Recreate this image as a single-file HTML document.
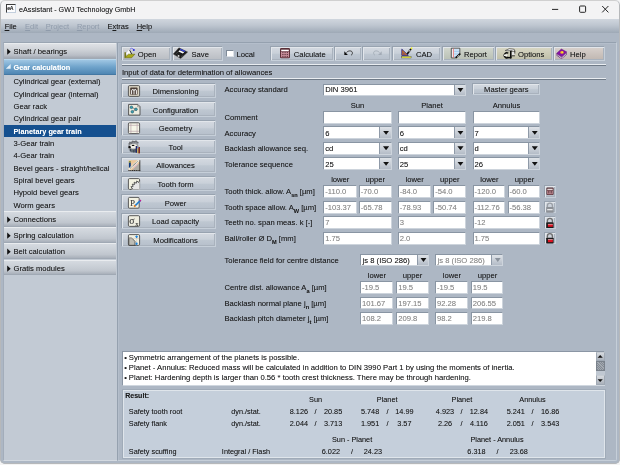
<!DOCTYPE html>
<html lang="en"><head><meta charset="utf-8"><title>eAssistant - GWJ Technology GmbH</title>
<style>
*{box-sizing:border-box;margin:0;padding:0}
html,body{width:620px;height:465px;overflow:hidden;background:#f4f4f4}
body{font-family:"Liberation Sans",Arial,sans-serif;font-size:7.65px;color:#1c1c1c;position:relative;text-shadow:0 0 0.45px rgba(20,24,30,.38)}
.a{position:absolute;white-space:nowrap}
.t{position:absolute;white-space:nowrap;height:9px;line-height:9px}
.c{text-align:center}.r{text-align:right}
.b{font-weight:bold;font-size:7.3px}
.s{font-size:7.3px}
#win{opacity:.999;position:absolute;left:0;top:0;width:620px;height:464.2px;background:#adb7c4;border-radius:5px;overflow:hidden}
#win:after{content:'';position:absolute;left:0;top:0;right:0;bottom:0;border:1px solid #b6b8ba;border-top-color:#d0d0d0;border-radius:5px;pointer-events:none}
#title{position:absolute;left:0;top:0;width:620px;height:19.4px;background:#f3f3f4}
#menu{position:absolute;left:0;top:19.4px;width:620px;height:13.4px;background:linear-gradient(#d0d6de,#bec6d0 45%,#9ea9b6)}
.mi.d{color:#8f9bab;text-shadow:none}
.mi u{text-decoration-thickness:0.7px;text-underline-offset:0.6px}
.hd{position:absolute;left:4px;width:112px;height:15.6px;background:linear-gradient(#d5dae0,#c9cfd6 45%,#c0c6ce 75%,#a9b0ba);border-top:1px solid #e9ecef;border-bottom:1px solid #a0a9b4}
.hd.sel{background:linear-gradient(#9fc6e3,#6fa3cb 50%,#4f86b3);border-top-color:#b7d6ec;border-bottom-color:#4478a3}
.btn{position:absolute;height:14.9px;background:linear-gradient(#d5dae1 0%,#c9d0d9 48%,#bec7d1 56%,#b6bfcb 100%);border:1px solid;border-color:#98a3b0 #c6cfd9 #c6cfd9 #98a3b0;box-shadow:inset 1px 1px 0 #e2e6eb,inset -1px -1px 0 #a9b2bd}
.inp{position:absolute;height:12.8px;background:#fff;border:1px solid #8995a3;border-bottom-color:#cdd4dc;border-right-color:#cdd4dc;overflow:hidden}
.ro{color:#8c8c8c;text-shadow:0 0 .5px rgba(140,140,140,.5)}
.w{color:#fff;text-shadow:0 0 .5px rgba(255,255,255,.5)}
.arr{position:absolute;right:0;top:0;bottom:0;width:11.3px;background:linear-gradient(#dfe3e8,#b4bcc7);border-left:1px solid #8f9aa8}
.arr:after{content:"";position:absolute;left:2.6px;top:3.3px;width:6.2px;height:4.1px;background:#111;clip-path:polygon(0 0,100% 0,50% 100%)}
.arr.dis:after{background:#8a929c}
sub{font-size:5.6px;vertical-align:baseline;position:relative;top:2.8px;font-weight:bold;line-height:0}
.sepd{position:absolute;height:1px;background:#6f7a87}
.sepl{position:absolute;height:1px;background:#e9edf1}
</style></head>
<body>
<div id="win">
<div id="title"></div>
<div class="a" style="left:5.6px;top:3.8px;width:10px;height:9.6px;border:1px solid #c3cfdd;border-top:1.5px solid #3a3a3a;border-left:1.5px solid #3a3a3a;background:#fcfcfd"></div>
<div class="t" style="left:7.3px;top:4px;font-size:5.2px;font-weight:bold;letter-spacing:-0.35px;color:#333">eA</div>
<div class="t" style="left:19.3px;top:5px;font-size:7.9px;color:#1e1e1e;transform-origin:0 0;transform:scaleX(0.911)">eAssistant - GWJ Technology GmbH</div>
<svg class="a" style="left:480px;top:0" width="140" height="19" viewBox="0 0 140 19"><g stroke="#1a1a1a" stroke-width="0.95" fill="none"><path d="M72 9.4h6.2"/><rect x="99.6" y="6" width="6" height="6.3" rx="0.9"/><path d="M122.2 6l6.2 6.4M128.400 6l-6.200 6.400"/></g></svg>
<div id="menu"></div>
<div class="t mi" style="left:4.7px;top:22px;font-size:7.5px;"><u>F</u>ile</div>
<div class="t mi d" style="left:25.1px;top:22px;font-size:7.5px;"><u>E</u>dit</div>
<div class="t mi d" style="left:45.7px;top:22px;font-size:7.5px;"><u>P</u>roject</div>
<div class="t mi d" style="left:76.9px;top:22px;font-size:7.5px;"><u>R</u>eport</div>
<div class="t mi" style="left:107.5px;top:22px;font-size:7.5px;">E<u>x</u>tras</div>
<div class="t mi" style="left:136.7px;top:22px;font-size:7.5px;"><u>H</u>elp</div>
<div class="a" style="left:3px;top:42px;width:114.4px;height:418.8px;background:#c2cad4;border-left:1px solid #a3adba;border-top:1px solid #9aa5b2;border-bottom:1px solid #d3d9e0"></div>
<div class="hd" style="top:43px;background:linear-gradient(#dee1e5,#cfd3d8 40%,#b9bec6 80%,#a2a8b1)"></div>
<svg class="a" style="left:0;top:43px" width="16" height="16"><polygon points="7.200,5.600 10.700,8.700 7.200,11.800" fill="#111"/></svg>
<div class="t" style="left:13.5px;top:47px;">Shaft / bearings</div>
<div class="hd sel" style="top:59.4px"></div>
<svg class="a" style="left:0;top:59.4px" width="16" height="16"><polygon points="10.700,5.100 10.700,9.700 5.800,9.700" fill="#e4eff8"/></svg>
<div class="t b w" style="left:13.5px;top:63px;">Gear calculation</div>
<div class="t" style="left:13.5px;top:77px;">Cylindrical gear (external)</div>
<div class="t" style="left:13.5px;top:90px;">Cylindrical gear (internal)</div>
<div class="t" style="left:13.5px;top:102px;">Gear rack</div>
<div class="t" style="left:13.5px;top:114px;">Cylindrical gear pair</div>
<div class="a" style="left:4px;top:125px;width:112px;height:12px;background:#15508f"></div>
<div class="t b w" style="left:13.5px;top:127px;">Planetary gear train</div>
<div class="t" style="left:13.5px;top:139px;">3-Gear train</div>
<div class="t" style="left:13.5px;top:151px;">4-Gear train</div>
<div class="t" style="left:13.5px;top:164px;">Bevel gears - straight/helical</div>
<div class="t" style="left:13.5px;top:176px;">Spiral bevel gears</div>
<div class="t" style="left:13.5px;top:188px;">Hypoid bevel gears</div>
<div class="t" style="left:13.5px;top:201px;">Worm gears</div>
<div class="hd" style="top:211px"></div>
<svg class="a" style="left:0;top:211px" width="16" height="16"><polygon points="7.200,5.600 10.700,8.700 7.200,11.800" fill="#111"/></svg>
<div class="t" style="left:13.5px;top:215px;">Connections</div>
<div class="hd" style="top:227.2px"></div>
<svg class="a" style="left:0;top:227.2px" width="16" height="16"><polygon points="7.200,5.600 10.700,8.700 7.200,11.800" fill="#111"/></svg>
<div class="t" style="left:13.5px;top:231px;">Spring calculation</div>
<div class="hd" style="top:243.4px"></div>
<svg class="a" style="left:0;top:243.4px" width="16" height="16"><polygon points="7.200,5.600 10.700,8.700 7.200,11.800" fill="#111"/></svg>
<div class="t" style="left:13.5px;top:247px;">Belt calculation</div>
<div class="hd" style="top:259.6px"></div>
<svg class="a" style="left:0;top:259.6px" width="16" height="16"><polygon points="7.200,5.600 10.700,8.700 7.200,11.800" fill="#111"/></svg>
<div class="t" style="left:13.5px;top:264px;">Gratis modules</div>
<div class="a" style="left:117.4px;top:42.2px;width:499.4px;height:419.3px;border:1px solid #95a1af;border-right-color:#c5ced8;border-bottom-color:#c5ced8;border-radius:0 0 2px 0;box-shadow:inset 1px 1px 0 #b4becb"></div>
<div class="btn" style="left:121px;top:45.6px;width:50.1px;height:15.6px;background:linear-gradient(#d3d6da,#c6c9ce 50%,#b9bdc3);"></div>
<div class="t" style="left:137.7px;top:50px;">Open</div>
<div class="btn" style="left:172px;top:45.6px;width:51px;height:15.6px;background:linear-gradient(#d3d6da,#c6c9ce 50%,#b9bdc3);"></div>
<div class="t" style="left:191.5px;top:50px;">Save</div>
<div class="a" style="left:226.3px;top:49.5px;width:7.6px;height:7.6px;background:#fff;border:1px solid #7f8b99;border-right-color:#dde2e8;border-bottom-color:#dde2e8"></div>
<div class="t" style="left:236.5px;top:50px;">Local</div>
<div class="btn" style="left:270px;top:45.6px;width:63.8px;height:15.6px;"></div>
<div class="t" style="left:293.8px;top:50px;">Calculate</div>
<div class="btn" style="left:334px;top:45.6px;width:28.1px;height:15.6px;"></div>
<div class="btn" style="left:362px;top:45.6px;width:29.4px;height:15.6px;"></div>
<div class="btn" style="left:392px;top:45.6px;width:49.3px;height:15.6px;"></div>
<div class="t" style="left:416px;top:50px;">CAD</div>
<div class="btn" style="left:442px;top:45.6px;width:52.8px;height:15.6px;background:linear-gradient(#d3d8cf,#c5cbc1 50%,#b9c0b5);"></div>
<div class="t" style="left:464px;top:50px;">Report</div>
<div class="btn" style="left:495px;top:45.6px;width:57.8px;height:15.6px;background:linear-gradient(#d8d7c5,#cccbb6 50%,#bfbea8);"></div>
<div class="t" style="left:518px;top:50px;">Options</div>
<div class="btn" style="left:553px;top:45.6px;width:52.3px;height:15.6px;background:linear-gradient(#d9d2ce,#ccc4bf 50%,#c0b7b1);"></div>
<div class="t" style="left:570px;top:50px;">Help</div>
<div class="sepl" style="left:122px;top:63.7px;width:483.5px"></div><div class="sepd" style="left:122px;top:64.7px;width:483.5px"></div>
<div class="t" style="left:122px;top:68px;">Input of data for determination of allowances</div>
<div class="sepl" style="left:122px;top:78.1px;width:483.5px"></div><div class="sepd" style="left:122px;top:79.1px;width:483.5px"></div>
<div class="btn" style="left:121px;top:82.7px;width:94.8px;height:15.7px"></div>
<div class="t c" style="left:140.6px;top:87px;width:70px;">Dimensioning</div>
<div class="btn" style="left:121px;top:101.32px;width:94.8px;height:15.7px"></div>
<div class="t c" style="left:140.6px;top:106px;width:70px;">Configuration</div>
<div class="btn" style="left:121px;top:119.94px;width:94.8px;height:15.7px"></div>
<div class="t c" style="left:140.6px;top:124px;width:70px;">Geometry</div>
<div class="btn" style="left:121px;top:138.56px;width:94.8px;height:15.7px"></div>
<div class="t c" style="left:140.6px;top:143px;width:70px;">Tool</div>
<div class="btn" style="left:121px;top:157.18px;width:94.8px;height:15.7px"></div>
<div class="t c" style="left:140.6px;top:161px;width:70px;">Allowances</div>
<div class="btn" style="left:121px;top:175.8px;width:94.8px;height:15.7px"></div>
<div class="t c" style="left:140.6px;top:180px;width:70px;">Tooth form</div>
<div class="btn" style="left:121px;top:194.42px;width:94.8px;height:15.7px"></div>
<div class="t c" style="left:140.6px;top:199px;width:70px;">Power</div>
<div class="btn" style="left:121px;top:213.04px;width:94.8px;height:15.7px"></div>
<div class="t c" style="left:140.6px;top:217px;width:70px;">Load capacity</div>
<div class="btn" style="left:121px;top:231.66px;width:94.8px;height:15.7px"></div>
<div class="t c" style="left:140.6px;top:236px;width:70px;">Modifications</div>
<div class="t" style="left:224.5px;top:85px;">Accuracy standard</div>
<div class="inp" style="left:323.4px;top:83.5px;width:142.7px"><i class="arr"></i></div>
<div class="t" style="left:325.2px;top:85px;">DIN 3961</div>
<div class="btn" style="left:472px;top:83.1px;width:68.2px;height:12.1px"></div>
<div class="t c" style="left:471.4px;top:85px;width:70px;">Master gears</div>
<div class="t c" style="left:322.5px;top:101px;width:70px;">Sun</div>
<div class="t c" style="left:397px;top:101px;width:70px;">Planet</div>
<div class="t c" style="left:471.5px;top:101px;width:70px;">Annulus</div>
<div class="t" style="left:224.5px;top:113px;">Comment</div>
<div class="inp" style="left:323.4px;top:110.9px;width:68.3px"></div>
<div class="inp" style="left:397.9px;top:110.9px;width:68.2px"></div>
<div class="inp" style="left:472.6px;top:110.9px;width:67.8px"></div>
<div class="t" style="left:224.5px;top:129px;">Accuracy</div>
<div class="inp" style="left:323.4px;top:126.4px;width:68.3px"><i class="arr"></i></div>
<div class="t" style="left:325.2px;top:129px;">6</div>
<div class="inp" style="left:397.9px;top:126.4px;width:68.2px"><i class="arr"></i></div>
<div class="t" style="left:399.7px;top:129px;">6</div>
<div class="inp" style="left:472.6px;top:126.4px;width:67.8px"><i class="arr"></i></div>
<div class="t" style="left:474.4px;top:129px;">7</div>
<div class="t" style="left:224.5px;top:144px;">Backlash allowance seq.</div>
<div class="inp" style="left:323.4px;top:141.9px;width:68.3px"><i class="arr"></i></div>
<div class="t" style="left:325.2px;top:144px;">cd</div>
<div class="inp" style="left:397.9px;top:141.9px;width:68.2px"><i class="arr"></i></div>
<div class="t" style="left:399.7px;top:144px;">cd</div>
<div class="inp" style="left:472.6px;top:141.9px;width:67.8px"><i class="arr"></i></div>
<div class="t" style="left:474.4px;top:144px;">d</div>
<div class="t" style="left:224.5px;top:160px;">Tolerance sequence</div>
<div class="inp" style="left:323.4px;top:157.4px;width:68.3px"><i class="arr"></i></div>
<div class="t" style="left:325.2px;top:160px;">25</div>
<div class="inp" style="left:397.9px;top:157.4px;width:68.2px"><i class="arr"></i></div>
<div class="t" style="left:399.7px;top:160px;">25</div>
<div class="inp" style="left:472.6px;top:157.4px;width:67.8px"><i class="arr"></i></div>
<div class="t" style="left:474.4px;top:160px;">26</div>
<div class="t c" style="left:305.3px;top:175px;width:70px;">lower</div>
<div class="t c" style="left:340.3px;top:175px;width:70px;">upper</div>
<div class="t c" style="left:379.8px;top:175px;width:70px;">lower</div>
<div class="t c" style="left:414.8px;top:175px;width:70px;">upper</div>
<div class="t c" style="left:454.5px;top:175px;width:70px;">lower</div>
<div class="t c" style="left:489.5px;top:175px;width:70px;">upper</div>
<div class="t" style="left:224.5px;top:187px;">Tooth thick. allow. A<sub>sn</sub> [µm]</div>
<div class="inp" style="left:323.4px;top:185.4px;width:33.3px"></div>
<div class="t ro" style="left:325.2px;top:187px;">-110.0</div>
<div class="inp" style="left:359px;top:185.4px;width:32.7px"></div>
<div class="t ro" style="left:360.8px;top:187px;">-70.0</div>
<div class="inp" style="left:397.9px;top:185.4px;width:33px"></div>
<div class="t ro" style="left:399.7px;top:187px;">-84.0</div>
<div class="inp" style="left:433.4px;top:185.4px;width:32.7px"></div>
<div class="t ro" style="left:435.2px;top:187px;">-54.0</div>
<div class="inp" style="left:472.6px;top:185.4px;width:32.8px"></div>
<div class="t ro" style="left:474.4px;top:187px;">-120.0</div>
<div class="inp" style="left:507.6px;top:185.4px;width:32.8px"></div>
<div class="t ro" style="left:509.4px;top:187px;">-60.0</div>
<div class="t" style="left:224.5px;top:203px;">Tooth space allow. A<sub>W</sub> [µm]</div>
<div class="inp" style="left:323.4px;top:200.9px;width:33.3px"></div>
<div class="t ro" style="left:325.2px;top:203px;">-103.37</div>
<div class="inp" style="left:359px;top:200.9px;width:32.7px"></div>
<div class="t ro" style="left:360.8px;top:203px;">-65.78</div>
<div class="inp" style="left:397.9px;top:200.9px;width:33px"></div>
<div class="t ro" style="left:399.7px;top:203px;">-78.93</div>
<div class="inp" style="left:433.4px;top:200.9px;width:32.7px"></div>
<div class="t ro" style="left:435.2px;top:203px;">-50.74</div>
<div class="inp" style="left:472.6px;top:200.9px;width:32.8px"></div>
<div class="t ro" style="left:474.4px;top:203px;">-112.76</div>
<div class="inp" style="left:507.6px;top:200.9px;width:32.8px"></div>
<div class="t ro" style="left:509.4px;top:203px;">-56.38</div>
<div class="t" style="left:224.5px;top:218px;">Teeth no. span meas. k [-]</div>
<div class="inp" style="left:323.4px;top:216.4px;width:68.3px"></div>
<div class="t ro" style="left:325.2px;top:218px;">7</div>
<div class="inp" style="left:397.9px;top:216.4px;width:68.2px"></div>
<div class="t ro" style="left:399.7px;top:218px;">3</div>
<div class="inp" style="left:472.6px;top:216.4px;width:67.8px"></div>
<div class="t ro" style="left:474.4px;top:218px;">-12</div>
<div class="t" style="left:224.5px;top:234px;">Ball/roller Ø D<sub>M</sub> [mm]</div>
<div class="inp" style="left:323.4px;top:231.9px;width:68.3px"></div>
<div class="t ro" style="left:325.2px;top:234px;">1.75</div>
<div class="inp" style="left:397.9px;top:231.9px;width:68.2px"></div>
<div class="t ro" style="left:399.7px;top:234px;">2.0</div>
<div class="inp" style="left:472.6px;top:231.9px;width:67.8px"></div>
<div class="t ro" style="left:474.4px;top:234px;">1.75</div>
<div class="btn" style="left:543.6px;top:185.4px;width:12.2px;height:12.2px"></div>
<div class="btn" style="left:543.6px;top:200.9px;width:12.2px;height:12.2px"></div>
<div class="btn" style="left:543.6px;top:216.4px;width:12.2px;height:12.2px"></div>
<div class="btn" style="left:543.6px;top:231.9px;width:12.2px;height:12.2px"></div>
<div class="t" style="left:224.5px;top:256px;">Tolerance field for centre distance</div>
<div class="inp" style="left:360.1px;top:253.5px;width:69px"><i class="arr"></i></div>
<div class="t" style="left:362.6px;top:256px;">js 8 (ISO 286)</div>
<div class="inp" style="left:435.1px;top:253.5px;width:68.3px"><i class="arr dis"></i></div>
<div class="t ro" style="left:437.6px;top:256px;">js 8 (ISO 286)</div>
<div class="t c" style="left:342px;top:271px;width:70px;">lower</div>
<div class="t c" style="left:377.5px;top:271px;width:70px;">upper</div>
<div class="t c" style="left:417px;top:271px;width:70px;">lower</div>
<div class="t c" style="left:452.5px;top:271px;width:70px;">upper</div>
<div class="t" style="left:224.5px;top:283px;">Centre dist. allowance A<sub>a</sub> [µm]</div>
<div class="inp" style="left:360.1px;top:281.2px;width:33.3px"></div>
<div class="t ro" style="left:361.9px;top:283px;">-19.5</div>
<div class="inp" style="left:396.35px;top:281.2px;width:32.8px"></div>
<div class="t ro" style="left:398.15px;top:283px;">19.5</div>
<div class="inp" style="left:435.1px;top:281.2px;width:32.8px"></div>
<div class="t ro" style="left:436.9px;top:283px;">-19.5</div>
<div class="inp" style="left:470.85px;top:281.2px;width:32.55px"></div>
<div class="t ro" style="left:472.65px;top:283px;">19.5</div>
<div class="t" style="left:224.5px;top:299px;">Backlash normal plane j<sub>n</sub> [µm]</div>
<div class="inp" style="left:360.1px;top:296.7px;width:33.3px"></div>
<div class="t ro" style="left:361.9px;top:299px;">101.67</div>
<div class="inp" style="left:396.35px;top:296.7px;width:32.8px"></div>
<div class="t ro" style="left:398.15px;top:299px;">197.15</div>
<div class="inp" style="left:435.1px;top:296.7px;width:32.8px"></div>
<div class="t ro" style="left:436.9px;top:299px;">92.28</div>
<div class="inp" style="left:470.85px;top:296.7px;width:32.55px"></div>
<div class="t ro" style="left:472.65px;top:299px;">206.55</div>
<div class="t" style="left:224.5px;top:314px;">Backlash pitch diameter j<sub>t</sub> [µm]</div>
<div class="inp" style="left:360.1px;top:312.2px;width:33.3px"></div>
<div class="t ro" style="left:361.9px;top:314px;">108.2</div>
<div class="inp" style="left:396.35px;top:312.2px;width:32.8px"></div>
<div class="t ro" style="left:398.15px;top:314px;">209.8</div>
<div class="inp" style="left:435.1px;top:312.2px;width:32.8px"></div>
<div class="t ro" style="left:436.9px;top:314px;">98.2</div>
<div class="inp" style="left:470.85px;top:312.2px;width:32.55px"></div>
<div class="t ro" style="left:472.65px;top:314px;">219.8</div>
<div class="a" style="left:122.4px;top:351px;width:482.8px;height:34.6px;background:#fff;border:1px solid #8b96a4;border-right-color:#d0d7df;border-bottom-color:#d0d7df"></div>
<div class="t" style="left:124.2px;top:353px;">•</div>
<div class="t" style="left:128.8px;top:353px;font-size:7.7px">Symmetric arrangement of the planets is possible.</div>
<div class="t" style="left:124.2px;top:363px;">•</div>
<div class="t" style="left:128.8px;top:363px;font-size:7.7px">Planet - Annulus: Reduced mass will be calculated in addition to DIN 3990 Part 1 by using the moments of inertia.</div>
<div class="t" style="left:124.2px;top:373px;">•</div>
<div class="t" style="left:128.8px;top:373px;font-size:7.7px">Planet: Hardening depth is larger than 0.56 * tooth crest thickness. There may be through hardening.</div>
<div class="a" style="left:595.5px;top:352.3px;width:9px;height:32.3px;background:#c0c8d2"></div>
<div class="a" style="left:595.5px;top:352.3px;width:9px;height:8.8px;background:linear-gradient(#d6dadf,#aab1bb);border:1px solid #a0a9b4;border-top-color:#c6ccd3"></div>
<div class="a" style="left:595.5px;top:361.1px;width:9px;height:9.5px;background:repeating-linear-gradient(45deg,#838a93 0 0.8px,#a3a9b1 0.8px 1.6px);border:1px solid #7a828c"></div>
<div class="a" style="left:595.5px;top:375.4px;width:9px;height:9.2px;background:linear-gradient(#d6dadf,#aab1bb);border:1px solid #a0a9b4;border-top-color:#c6ccd3"></div>
<div class="a" style="left:121.6px;top:388.6px;width:484.2px;height:70px;background:#c5cfdb;border:1px solid #a0abb8;box-shadow:inset 0 0 0 1px #dfe5eb"></div>
<div class="t b" style="left:125.2px;top:391px;font-size:7.05px">Result:</div>
<div class="t c s" style="left:280.6px;top:395px;width:70px;">Sun</div>
<div class="t c s" style="left:352.2px;top:395px;width:70px;">Planet</div>
<div class="t c s" style="left:426.9px;top:395px;width:70px;">Planet</div>
<div class="t c s" style="left:497.5px;top:395px;width:70px;">Annulus</div>
<div class="t s" style="left:128.8px;top:407px;">Safety tooth root</div>
<div class="t c s" style="left:211px;top:407px;width:70px;">dyn./stat.</div>
<div class="t c s" style="left:278.9px;top:407px;width:40px;">8.126</div>
<div class="t c s" style="left:310.6px;top:407px;width:10px;">/</div>
<div class="t c s" style="left:313.1px;top:407px;width:40px;">20.85</div>
<div class="t c s" style="left:350.1px;top:407px;width:40px;">5.748</div>
<div class="t c s" style="left:382.6px;top:407px;width:10px;">/</div>
<div class="t c s" style="left:384.4px;top:407px;width:40px;">14.99</div>
<div class="t c s" style="left:425px;top:407px;width:40px;">4.923</div>
<div class="t c s" style="left:456.4px;top:407px;width:10px;">/</div>
<div class="t c s" style="left:458.9px;top:407px;width:40px;">12.84</div>
<div class="t c s" style="left:495.8px;top:407px;width:40px;">5.241</div>
<div class="t c s" style="left:527.6px;top:407px;width:10px;">/</div>
<div class="t c s" style="left:530.2px;top:407px;width:40px;">16.86</div>
<div class="t s" style="left:128.8px;top:419px;">Safety flank</div>
<div class="t c s" style="left:211px;top:419px;width:70px;">dyn./stat.</div>
<div class="t c s" style="left:278.9px;top:419px;width:40px;">2.044</div>
<div class="t c s" style="left:310.6px;top:419px;width:10px;">/</div>
<div class="t c s" style="left:313.1px;top:419px;width:40px;">3.713</div>
<div class="t c s" style="left:350.1px;top:419px;width:40px;">1.951</div>
<div class="t c s" style="left:382.6px;top:419px;width:10px;">/</div>
<div class="t c s" style="left:384.4px;top:419px;width:40px;">3.57</div>
<div class="t c s" style="left:425px;top:419px;width:40px;">2.26</div>
<div class="t c s" style="left:456.4px;top:419px;width:10px;">/</div>
<div class="t c s" style="left:458.9px;top:419px;width:40px;">4.116</div>
<div class="t c s" style="left:495.8px;top:419px;width:40px;">2.051</div>
<div class="t c s" style="left:527.6px;top:419px;width:10px;">/</div>
<div class="t c s" style="left:530.2px;top:419px;width:40px;">3.543</div>
<div class="t c s" style="left:317.1px;top:435px;width:70px;">Sun - Planet</div>
<div class="t c s" style="left:462px;top:435px;width:70px;">Planet - Annulus</div>
<div class="t s" style="left:128.8px;top:447px;">Safety scuffing</div>
<div class="t c s" style="left:211px;top:447px;width:70px;">Integral / Flash</div>
<div class="t c s" style="left:310.9px;top:447px;width:40px;">6.022</div>
<div class="t c s" style="left:346.9px;top:447px;width:10px;">/</div>
<div class="t c s" style="left:352.9px;top:447px;width:40px;">24.23</div>
<div class="t c s" style="left:456.5px;top:447px;width:40px;">6.318</div>
<div class="t c s" style="left:492.6px;top:447px;width:10px;">/</div>
<div class="t c s" style="left:498.8px;top:447px;width:40px;">23.68</div>
<svg class="a" style="left:0;top:0;pointer-events:none" width="620" height="465" viewBox="0 0 620 465"><g><polygon points="126.1,53.2 128.6,49.5 131.1,50 131.9,54.4 127,56.6" fill="#fbfbfb" stroke="#aaa" stroke-width="0.3"/><path d="M129.7 50.1l1.9 3.9" stroke="#222" stroke-width="1"/><path d="M125.2 52.2v5.4" stroke="#6f700c" stroke-width="1.4"/><polygon points="124.6,57.8 131.6,57.8 134.9,54.2 128.4,54.2 125.9,56.6" fill="#a9a916" stroke="#5a5b08" stroke-width="0.5"/><path d="M129.9 49.3q1.6-1.9 3.3-.3" stroke="#5a5ae8" stroke-width="0.8" fill="none"/><circle cx="133.8" cy="50" r="1" fill="#2828e0"/></g><g><polygon points="178.9,47.8 187.7,52 180.7,58.6 173.2,54.1" fill="#1c1c1c" stroke="#444" stroke-width="0.4"/><polygon points="180.4,48.8 185.4,50.9 184.7,52.1 179.7,50.1" fill="#3a48e0"/><polygon points="179.5,50.3 184.2,52.3 182.8,53.6 178.4,51.5" fill="#fff"/><circle cx="178.6" cy="55.9" r="0.9" fill="#e8e8e8"/><path d="M175.5 54.2l3.3-3M177 55.4l1.2-1M181 56.8l1.6-1.5" stroke="#666" stroke-width="0.5"/></g><g><rect x="280" y="47.9" width="10" height="10.3" rx="1.3" fill="#5a2f37"/><rect x="281.2" y="49.7" width="7.6" height="1.5" fill="#fff"/><rect x="281" y="51.7" width="8" height="5.6" fill="#c78e9b"/><path d="M282.4 52.6h1M284.6 52.6h1M286.8 52.6h1M282.4 54.5h1M284.6 54.5h1M286.8 54.5h1M282.4 56.4h1M284.6 56.4h1M286.8 56.4h1" stroke="#3a1a20" stroke-width="0.9"/></g><g><polygon points="344.3,51.300 344.3,55 347.900,55" fill="#0c0c0c"/><path d="M346.500 52.500C348.400 50.200 352.700 50.300 352.400 53.300C352.300 54.300 351.900 54.800 351.200 55.100" stroke="#2c2c2c" stroke-width="0.900" fill="none"/></g><g><polygon points="381.700,51.300 381.700,55 378.100,55" fill="#a3abb6"/><path d="M379.500 52.500C377.600 50.200 373.300 50.300 373.600 53.300C373.700 54.300 374.100 54.800 374.800 55.100" stroke="#a3abb6" stroke-width="0.900" fill="none"/></g><g><polygon points="401.8,49.2 401.8,55.4 408.3,55.4" fill="#d8761c" stroke="#1c1c88" stroke-width="0.8"/><path d="M403 52.5l2 2M403 54.2h1.5" stroke="#2a2ac0" stroke-width="0.6"/><path d="M407.2 53.9l3.9-5.2" stroke="#111" stroke-width="1.7"/><path d="M408.9 51.7l1.2-1.6" stroke="#fff" stroke-width="1"/><path d="M411 48.9l1.1-1.3" stroke="#f0f030" stroke-width="1.5"/><rect x="401.8" y="56.5" width="9.3" height="1.5" fill="#f2f23a" stroke="#333" stroke-width="0.35"/></g><g><path d="M451.300 48.200h8.500v5.600l-4 4.100h-4.500z" fill="#f2f6fc" stroke="#333" stroke-width="0.800"/><path d="M453.400 48.600v9" stroke="#e86464" stroke-width="0.800"/><path d="M454.100 50h5.200M454.100 51.600h5.200M454.100 53.200h5.200M454.100 54.800h3.800M454.100 56.400h2.200" stroke="#7ab4ea" stroke-width="0.700"/><path d="M455.700 57.900l4.600-4.200" stroke="#111" stroke-width="1.700"/><path d="M457.300 56.700l1.700-1.500" stroke="#e4e4e4" stroke-width="0.800"/></g><g><path d="M505.300 50.500Q509 47.500 514.200 49.300L514.900 51.300H512.200V50.700H506.200Z" fill="#f6f6f6" stroke="#1a1a1a" stroke-width="0.550"/><rect x="510" y="50.900" width="1.700" height="7.500" fill="#0c0c0c"/><rect x="511.800" y="52" width="2.700" height="3.500" fill="#e4e4e4"/><path d="M511.800 55.800h3.100" stroke="#111" stroke-width="0.800"/><path d="M514.800 50.800v2.800" stroke="#111" stroke-width="0.700"/><path d="M508.300 53.300A2.500 2.500 0 1 0 508.300 57.300" fill="none" stroke="#0c0c0c" stroke-width="1.400"/><rect x="504" y="54.500" width="3.200" height="1.500" fill="#f2f2f2"/><path d="M506.600 57.500L511 57.700" stroke="#0c0c0c" stroke-width="1.500"/></g><g><polygon points="556.6,54 561.5,57.6 566.9,52.6 566.9,54.2 561.5,59 556.6,55.4" fill="#4a0a62"/><polygon points="557.2,54.6 561.5,57.8 566.5,53.2 566.5,53.9 561.5,58.4 557.2,55.2" fill="#fff"/><polygon points="561.3,49 566.9,52 561.6,56.7 556.5,53.5" fill="#8612a6" stroke="#4a0a62" stroke-width="0.4"/><ellipse cx="562" cy="52.4" rx="1.7" ry="1.3" fill="#f0b020"/><ellipse cx="562.3" cy="52.2" rx="0.8" ry="0.6" fill="#f8f040"/></g><g><rect x="128.4" y="85.60000000000001" width="11.2" height="10.799999999999999" rx="1.2" fill="#d9d3c2" stroke="#4c4c4c" stroke-width="0.9"/><rect x="130.2" y="87.6" width="7.4" height="7.2" rx="0.8" fill="#4a3c34"/><path d="M131.6 94.4v-3.4q0-1.6 1.2-1.6t1.2 1.6v3.4M134 91q0-1.6 1.2-1.6t1.2 1.6v3.4" stroke="#f4f4f4" stroke-width="1" fill="none"/></g><g><path d="M128.6 104.4h9.2l2.2 2.2v8.5h-11.4z" fill="#ecebdf" stroke="#4c4c4c" stroke-width="0.9"/><path d="M137.6 104.6v2.2h2.2" fill="none" stroke="#666" stroke-width="0.5"/><path d="M131.4 107.3l4.6 2-3.7 2.4" stroke="#333" stroke-width="0.5" fill="none"/><circle cx="131.4" cy="107.3" r="1.35" fill="#3aa0b4" stroke="#1c4c58" stroke-width="0.5"/><circle cx="136" cy="109.3" r="1.35" fill="#3aa0b4" stroke="#1c4c58" stroke-width="0.5"/><circle cx="132.3" cy="111.8" r="1.35" fill="#3aa0b4" stroke="#1c4c58" stroke-width="0.5"/></g><g><rect x="128.4" y="122.80000000000001" width="11.2" height="10.799999999999999" rx="1.2" fill="#f6f6e8" stroke="#4c4c4c" stroke-width="0.9"/><path d="M130.9 123v10.4M137.1 123v10.4M128.8 125.3h10.4M128.8 131.3h10.4" stroke="#b9a3aa" stroke-width="0.7"/></g><g><ellipse cx="133.3" cy="146.8" rx="5.3" ry="5.6" fill="#9a9da2"/><path d="M129 144.400l1-2 1.500.700 1.200-1.700 1.800.600 1.500-.900 1.300 1.500 1.200.300" stroke="#6e7074" stroke-width="1.500" fill="none"/><ellipse cx="133.500" cy="146.300" rx="3.500" ry="2.300" fill="#f3f1e6"/><ellipse cx="133.100" cy="145.400" rx="1.400" ry="0.650" fill="#0c0c0c"/><ellipse cx="129.600" cy="147.200" rx="1.300" ry="1.100" fill="#0c0c0c"/><path d="M130.400 148.800v2.600M132 149.300v2.900M133.700 149.400v3.100M135.100 149v3.400" stroke="#34424f" stroke-width="1.100"/><rect x="135.700" y="146" width="1.500" height="6.800" fill="#1e2668"/><rect x="137.100" y="146.600" width="1.300" height="6.600" fill="#c2b05a"/><rect x="138.400" y="147" width="1.500" height="6.400" fill="#7c1e10"/><rect x="137" y="147" width="1.400" height="1.200" fill="#6a86d8"/></g><g><rect x="128.600" y="160.200" width="11" height="10.400" fill="#ecc79a"/><rect x="133.500" y="163" width="4" height="6" fill="#e6c2c6"/><polygon points="139.600,163 139.600,170.600 131.600,170.600" fill="#aeaca4"/><rect x="128.900" y="162.400" width="1.900" height="5.800" fill="#0e3c80"/><rect x="128.900" y="161" width="1.900" height="1.500" fill="#8c9a44"/><path d="M139.800 160.200v11" stroke="#3a3a3a" stroke-width="1"/><path d="M128.400 170.500h11.800" stroke="#2c2c2c" stroke-width="1.200" stroke-dasharray="1.300 0.500"/><path d="M128.900 169.500l10-9.300" stroke="#ecebdc" stroke-width="2.100"/><path d="M130.500 168l7.500-7" stroke="#1a1a1a" stroke-width="0.900" stroke-dasharray="0.800 0.900"/></g><g><rect x="128.4" y="178.6" width="11.2" height="10.799999999999999" rx="1.2" fill="#f3f2e2" stroke="#4c4c4c" stroke-width="0.9"/><path d="M130.4 189.6 L132.5 188.5 L130.9 186.8 L133.2 186.3 L132.2 184.2 L134.5 184.5 L134.2 182.2 L136.3 183.2 L136.8 180.9 L138.5 182.5 L139.6 180.4 L139.6 189.6 Z" fill="#e6e6e6"/><path d="M130.4 189.6 L132.5 188.5 L130.9 186.8 L133.2 186.3 L132.2 184.2 L134.5 184.5 L134.2 182.2 L136.3 183.2 L136.8 180.9 L138.5 182.5 L139.6 180.4" fill="none" stroke="#3a3a3a" stroke-width="0.8" stroke-linejoin="round"/></g><g><rect x="128.4" y="197.4" width="10.799999999999999" height="10.799999999999999" rx="1.2" fill="#f3f2e2" stroke="#4c4c4c" stroke-width="0.9"/><text x="130" y="206.200" font-family="Liberation Serif,serif" font-size="9" fill="#444">P</text><path d="M135.2 205.600l5-4.900" stroke="#2a8ae0" stroke-width="1.700"/><path d="M135.600 205.200l4.300-4.200" stroke="#103050" stroke-width="0.600" stroke-dasharray="0.500 0.700"/><path d="M134.100 206.700l1.300-1.300" stroke="#e07818" stroke-width="1.900"/><path d="M139.900 201l.9-.9" stroke="#c01888" stroke-width="1.800"/></g><g><rect x="128.4" y="215.70000000000002" width="11.2" height="10.7" rx="1.2" fill="#eeede0" stroke="#4c4c4c" stroke-width="0.9"/><text x="129.300" y="224" font-family="Liberation Serif,serif" font-size="9.800" fill="#444">σ</text><text x="135.200" y="225.600" font-family="Liberation Serif,serif" font-size="6.500" fill="#333">x</text></g><g><rect x="128.4" y="234.6" width="11.2" height="10.799999999999999" rx="1.2" fill="#f1f0e2" stroke="#4c4c4c" stroke-width="0.9"/><path d="M128.800 238h3l3.200 3.400v3.900h-6.200z" fill="#bdbcb4" stroke="#333" stroke-width="0.700"/><path d="M128.800 238.400h10.400M136.600 235v10.400" stroke="#c9bfb6" stroke-width="0.500"/><path d="M136.600 235.200l1.700 1.700h-1v1h-1.400v-1h-1zM136.600 245.200l1.700-1.700h-1v-1h-1.400v1h-1z" fill="#1f86e0"/></g><g><rect x="546.400" y="187.500" width="7.200" height="7.600" rx="1" fill="#4e2a30"/><rect x="547.300" y="188.700" width="5.400" height="1.200" fill="#f4eaea"/><rect x="547.200" y="190.500" width="5.600" height="3.800" fill="#c08a94"/><path d="M548 191.300h.8M549.600 191.300h.8M551.200 191.300h.8M548 192.800h.8M549.600 192.800h.8M551.200 192.800h.8" stroke="#30161a" stroke-width="0.800"/></g><g><path d="M547.400 207.1 v-1.500a2.500 2.500 0 0 1 5 0v1.500" fill="none" stroke="#9a9fa6" stroke-width="1.300"/><rect x="546.200" y="207.1" width="7.400" height="5.700" rx="0.600" fill="#8c9096"/><rect x="547.200" y="209.0" width="5.400" height="1.300" fill="#e6e8ea"/></g><g><path d="M547.400 222.3 v-1.500a2.500 2.500 0 0 1 5 0v1.500" fill="none" stroke="#6c6c6c" stroke-width="1.300"/><rect x="546.200" y="222.3" width="7.400" height="5.700" rx="0.600" fill="#1a1a1a"/><rect x="547.900" y="224.1" width="4.900" height="2.700" fill="#e01222"/><rect x="547.900" y="223.9" width="4.900" height="0.600" fill="#f4dada"/></g><g><path d="M547.400 237.70000000000002 v-1.500a2.500 2.500 0 0 1 5 0v1.500" fill="none" stroke="#6c6c6c" stroke-width="1.300"/><rect x="546.200" y="237.70000000000002" width="7.400" height="5.700" rx="0.600" fill="#1a1a1a"/><rect x="547.900" y="239.5" width="4.900" height="2.700" fill="#e01222"/><rect x="547.900" y="239.3" width="4.900" height="0.600" fill="#f4dada"/></g><polygon points="597.6,357.7 602.8,357.7 600.2,355" fill="#111"/><polygon points="597.6,379.2 602.8,379.2 600.2,382" fill="#111"/></svg>
</div>
</body></html>
